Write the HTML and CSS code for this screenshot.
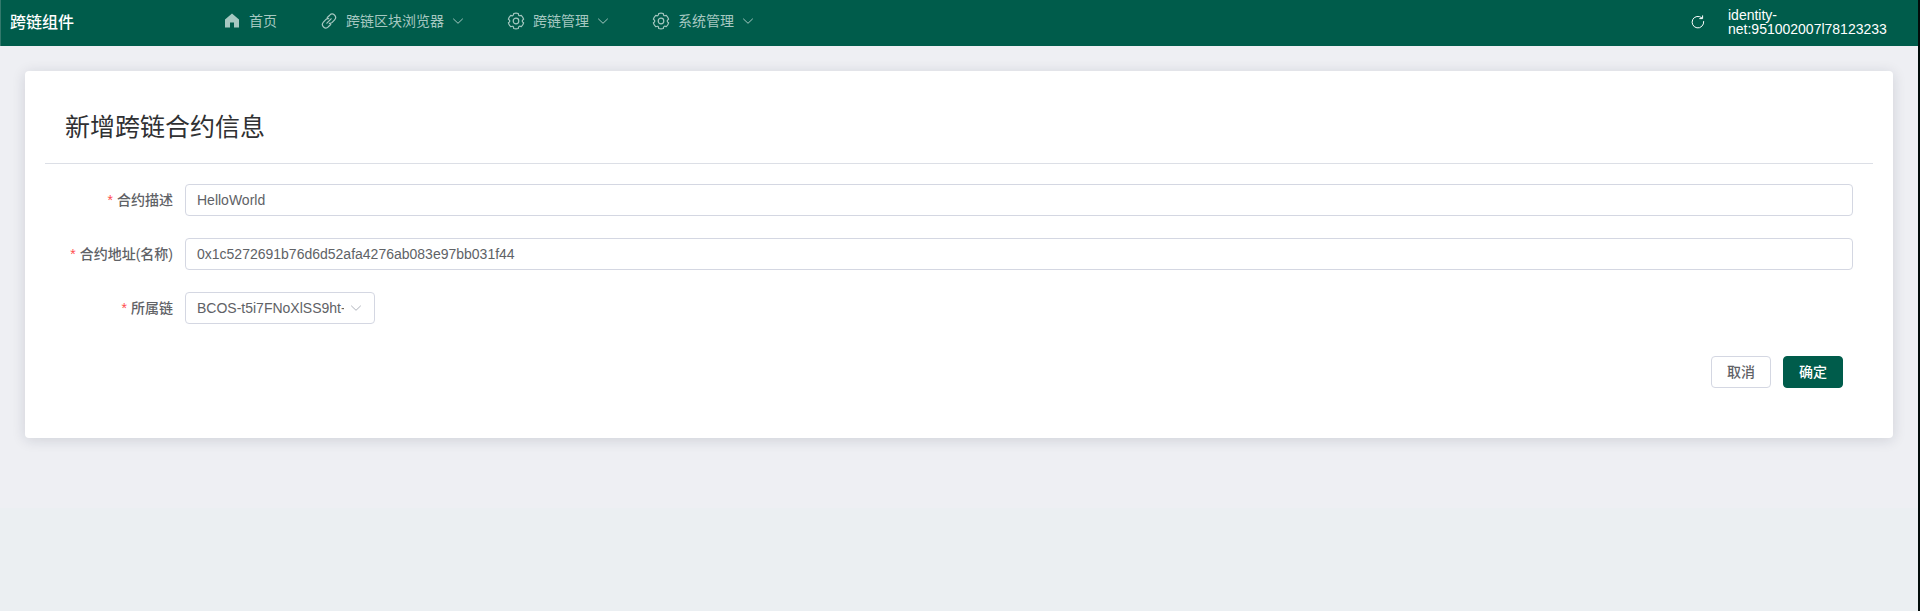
FILE: index.html
```
<!DOCTYPE html>
<html lang="zh-CN">
<head>
<meta charset="utf-8">
<title>跨链组件</title>
<link rel="stylesheet" href="styles.css">
</head>
<body>
<svg class="sprite" aria-hidden="true">
  <symbol id="gear" viewBox="0 0 18 18">
    <path d="M6.7 1.500Q9 .9 11.300 1.500Q11.300 3.200 12.100 3.600T14.300 3.300Q16 5 16.600 7.200Q15.200 8 15.200 9T16.600 10.800Q16 13 14.300 14.700Q12.900 13.900 12.100 14.400T11.300 16.500Q9 17.100 6.700 16.500Q6.700 14.800 5.900 14.400T3.700 14.700Q2 13 1.400 10.800Q2.800 10 2.800 9T1.400 7.200Q2 5 3.700 3.300Q5.100 4.100 5.900 3.600T6.700 1.500Z"/>
    <circle cx="9" cy="9" r="2.800"/>
  </symbol>
  <symbol id="chevron" viewBox="0 0 12 12"><path d="M1.500 4L6 8.300L10.500 4"/></symbol>
</svg>
<header class="topbar">
  <div class="brand">跨链组件</div>
  <nav class="menu">
    <a class="menu-item" href="#">
      <span class="menu-icon"><svg class="icon solid" viewBox="0 0 18 18"><path d="M9 1.500L16 7.600V15.500H11V10.500H7V15.500H2V7.600Z"/></svg></span>
      <span>首页</span>
    </a>
    <a class="menu-item" href="#">
      <span class="menu-icon"><svg class="icon" viewBox="0 0 18 18"><path d="M7.300 5.500L9.700 3.200A3.200 3.200 0 0 1 14.600 7.800L12.200 10.400A3.200 3.200 0 0 1 9.300 11.300M10.700 12.500L8.300 14.800A3.200 3.200 0 0 1 3.400 10.200L5.800 7.600A3.200 3.200 0 0 1 8.700 6.700M6.900 11.200L11.100 6.800"/></svg></span>
      <span>跨链区块浏览器</span>
      <svg class="arrow"><use href="#chevron"/></svg>
    </a>
    <a class="menu-item" href="#">
      <span class="menu-icon"><svg class="icon"><use href="#gear"/></svg></span>
      <span>跨链管理</span>
      <svg class="arrow"><use href="#chevron"/></svg>
    </a>
    <a class="menu-item" href="#">
      <span class="menu-icon"><svg class="icon"><use href="#gear"/></svg></span>
      <span>系统管理</span>
      <svg class="arrow"><use href="#chevron"/></svg>
    </a>
  </nav>
  <button class="refresh" type="button" aria-label="刷新">
    <svg viewBox="0 0 14 14"><path d="M12.700 6.500A5.800 5.800 0 1 1 10.800 2.800M8.700 3.600H11.600V.8"/></svg>
  </button>
  <div class="user">identity-net:951002007l78123233</div>
</header>
<main class="page">
  <section class="card">
    <h1 class="card-title">新增跨链合约信息</h1>
    <form class="form">
      <div class="row">
        <label class="label" for="desc">合约描述</label>
        <input class="field" id="desc" type="text" value="HelloWorld">
      </div>
      <div class="row">
        <label class="label" for="address">合约地址(名称)</label>
        <input class="field" id="address" type="text" value="0x1c5272691b76d6d52afa4276ab083e97bb031f44">
      </div>
      <div class="row">
        <label class="label" for="chain">所属链</label>
        <div class="select-box">
          <select class="field" id="chain"><option>BCOS-t5i7FNoXlSS9ht-</option></select>
          <svg class="select-arrow"><use href="#chevron"/></svg>
        </div>
      </div>
      <div class="actions">
        <button class="btn" type="button">取消</button>
        <button class="btn primary" type="submit">确定</button>
      </div>
    </form>
  </section>
</main>
</body>
</html>
```
FILE: styles.css
```
* { box-sizing: border-box; }

html { background: #ebeff2; }

body {
  margin: 0;
  min-height: 100vh;
  border-right: 2px solid #020c0a;
  font: 14px/20px "Liberation Sans", "Noto Sans CJK SC", sans-serif;
  color: #606266;
}

input, select, button { font: inherit; }

.sprite { position: absolute; width: 0; height: 0; }

svg {
  fill: none;
  stroke: currentColor;
  stroke-linecap: round;
  stroke-linejoin: round;
}

.topbar {
  display: flex;
  align-items: center;
  height: 46px;
  padding: 0 30px 0 9px;
  background: #005c4b;
  border-left: 1px solid #33796c;
  box-shadow: 0 1px 4px rgba(0, 21, 41, 0.12);
  color: #fff;
}

.brand {
  width: 190px;
  font-size: 16px;
  font-weight: 500;
}

.menu {
  display: flex;
  flex: 1;
  padding-bottom: 4px;
}

.menu-item {
  display: flex;
  align-items: center;
  padding: 0 20px;
  color: #a6c8c1;
  text-decoration: none;
}

.menu-icon {
  display: flex;
  justify-content: center;
  width: 24px;
  margin-right: 5px;
}

.icon { width: 18px; height: 18px; stroke-width: 1.2; }
.solid { fill: currentColor; stroke-width: 0; }
.arrow { width: 12px; height: 12px; margin-left: 8px; }

.refresh {
  display: flex;
  margin-right: 23px;
  padding: 0 0 2px;
  border: 0;
  background: none;
  color: #fff;
}

.refresh svg { width: 14px; height: 14px; }

.user {
  width: 160px;
  padding-bottom: 2px;
  line-height: 14px;
  overflow-wrap: break-word;
}

.page {
  min-height: 462px;
  padding: 25px;
  background: #eeeff3;
}

.card {
  padding: 20px;
  border-radius: 4px;
  background: #fff;
  box-shadow: 0 2px 14px rgba(20, 30, 60, 0.14);
}

.card-title {
  margin: 0;
  padding: 18px 20px;
  border-bottom: 1px solid #dcdfe6;
  font-size: 25px;
  font-weight: 400;
  line-height: 36px;
  color: #303133;
}

.form { padding: 20px 20px 30px; }

.row { display: flex; margin-bottom: 22px; }

.label {
  width: 120px;
  padding-right: 12px;
  font-weight: 500;
  line-height: 32px;
  text-align: right;
}

.label::before {
  content: "*";
  margin-right: 4px;
  color: #ff4d4f;
}

.field {
  flex: 1;
  min-width: 0;
  height: 32px;
  padding: 0 11px;
  border: 1px solid #d4d7e2;
  border-radius: 4px;
  background: #fff;
  color: #606266;
}

.select-box { position: relative; display: flex; width: 190px; }

.select-box .field {
  appearance: none;
  padding-right: 30px;
}

.select-arrow {
  position: absolute;
  top: 10px;
  right: 13px;
  width: 12px;
  height: 12px;
  color: #b0b4bd;
  pointer-events: none;
}

.actions {
  display: flex;
  justify-content: flex-end;
  gap: 12px;
  padding: 10px 10px 0;
}

.btn {
  width: 60px;
  height: 32px;
  padding: 0;
  border: 1px solid #d4d7e2;
  border-radius: 4px;
  background: #fff;
  color: #606266;
  font-weight: 500;
}

.primary {
  border-color: #005c4b;
  background: #005c4b;
  color: #fff;
}
```
